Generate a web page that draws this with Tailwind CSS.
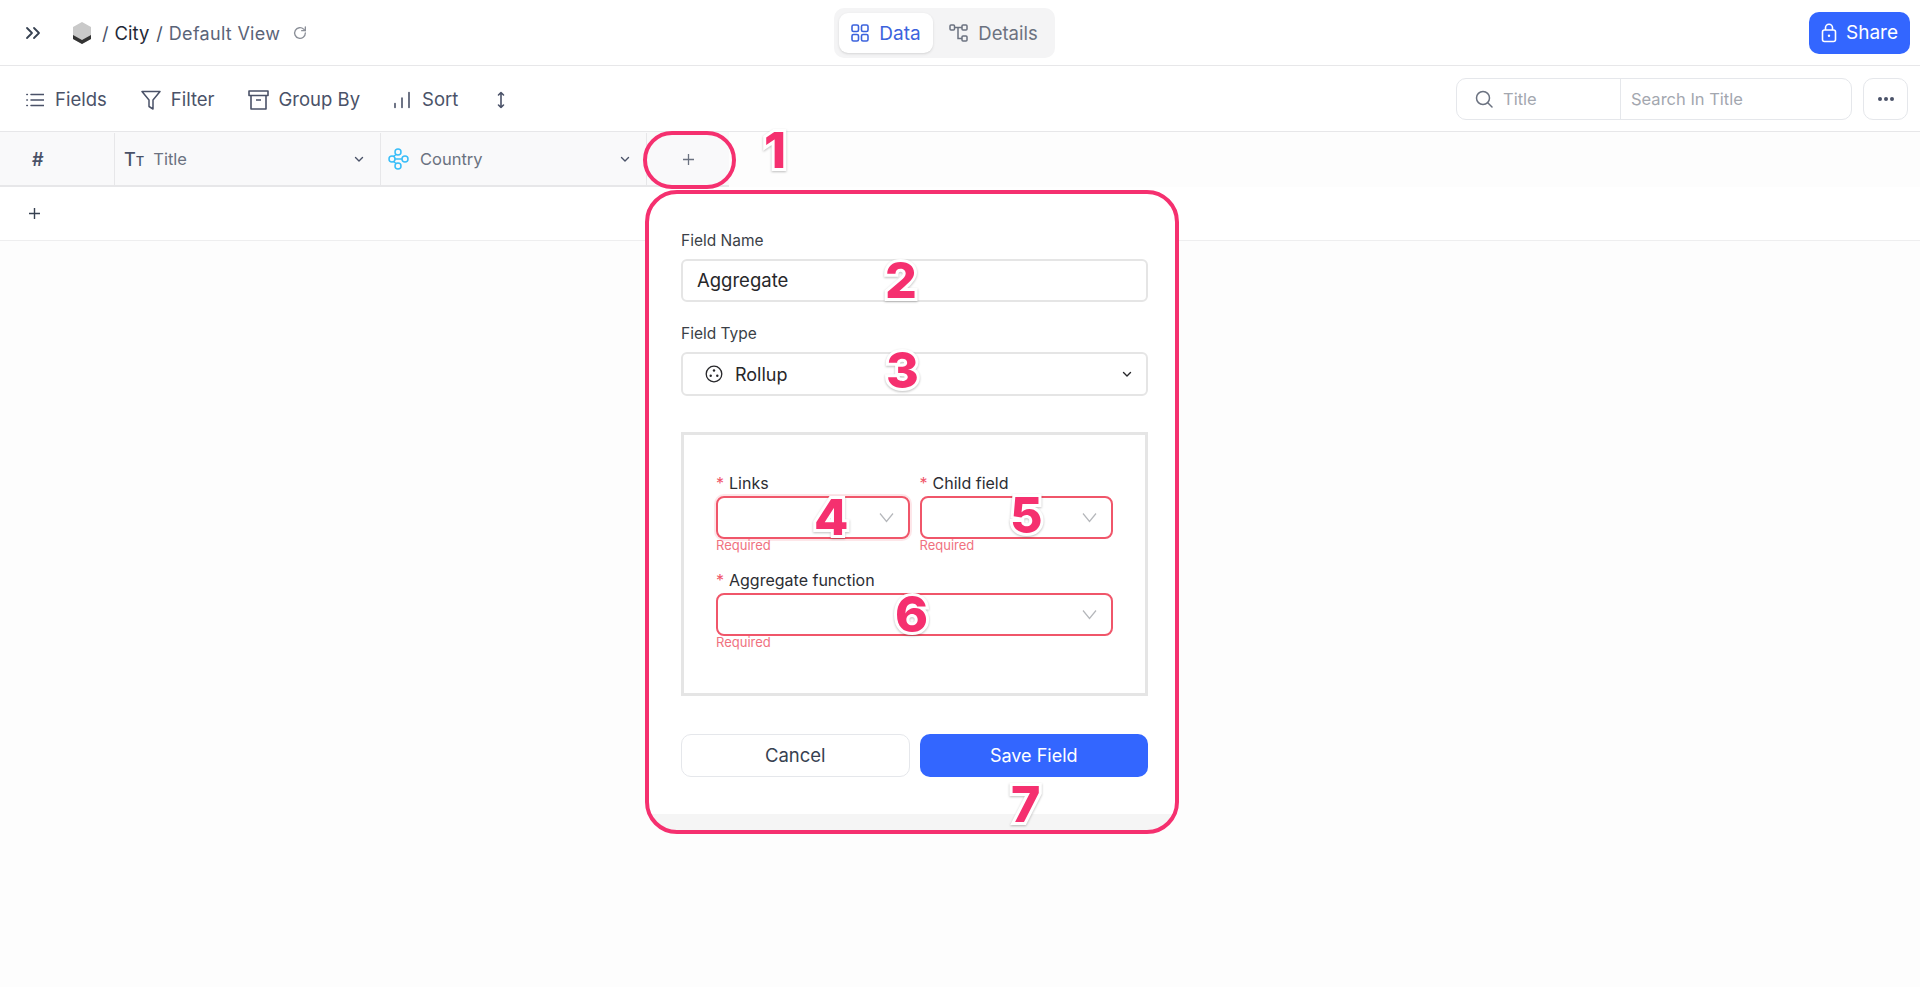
<!DOCTYPE html>
<html lang="en">
<head>
    <meta charset="UTF-8">
    <title>City - Default View</title>
    <script src="https://cdn.jsdelivr.net/npm/@tailwindcss/browser@4"></script>
</head>
<body class="relative h-[987px] overflow-hidden bg-[#fdfdfd] font-['Inter',sans-serif] text-[#4a5268]">

    <!-- Top bar -->
    <header class="relative flex h-[66px] items-center justify-between border-b border-[#e7e7e9] bg-white pr-[10px] pl-[24px]">
        <div class="flex items-center">
            <svg class="h-[18px] w-[18px] text-[#374151]" viewBox="0 0 18 18" fill="none" stroke="currentColor" stroke-width="1.8" stroke-linecap="round" stroke-linejoin="round"><path d="M3 4l5 5-5 5M10 4l5 5-5 5"/></svg>
            <svg class="ml-[29px] h-[24px] w-[22px]" viewBox="0 0 22 24"><path d="M11 1l9 5v12l-9 5-9-5V6z" fill="#c9c9c9"/><path d="M2 14l9 5 9-5v4l-9 5-9-5z" fill="#333"/></svg>
            <span class="ml-[9px] pt-[2px] text-[18px] text-[#4a5268]">/</span>
            <span class="ml-[6px] pt-[2px] text-[18.5px] text-[#1f2937]">City</span>
            <span class="ml-[7px] pt-[2px] text-[18px] text-[#4a5268]">/</span>
            <span class="ml-[6px] pt-[2px] text-[18px] tracking-[0.3px] text-[#5b6478]">Default View</span>
            <svg class="ml-[12px] h-[16px] w-[16px] text-[#8b8f98]" viewBox="0 0 24 24" fill="none" stroke="currentColor" stroke-width="2" stroke-linecap="round" stroke-linejoin="round"><path d="M20 12a8 8 0 1 1-2.5-5.8L20 8.5"/><path d="M20 3v5.5h-5.5"/></svg>
        </div>
        <div class="absolute top-[8px] left-[834px] flex h-[50px] w-[221px] items-center gap-[4px] rounded-[10px] bg-[#f4f4f5] p-[5px]">
            <div class="flex h-[40px] w-[94px] items-center justify-center gap-[10px] rounded-[9px] bg-white text-[19px] text-[#3c63dd] shadow-sm">
                <svg class="h-[18px] w-[18px]" viewBox="0 0 18 18" fill="none" stroke="currentColor" stroke-width="1.6"><rect x="1" y="1" width="6.5" height="6.5" rx="1.5"/><rect x="10.5" y="1" width="6.5" height="6.5" rx="1.5"/><rect x="1" y="10.5" width="6.5" height="6.5" rx="1.5"/><rect x="10.5" y="10.5" width="6.5" height="6.5" rx="1.5"/></svg>
                <span class="pt-[2px]">Data</span>
            </div>
            <div class="flex h-[40px] flex-1 items-center justify-center gap-[9px] text-[18.5px] text-[#6b7280]">
                <svg class="h-[18px] w-[20px]" viewBox="0 0 20 18" fill="none" stroke="currentColor" stroke-width="1.5"><rect x="1" y="1" width="4.5" height="5" rx="1"/><rect x="13" y="1" width="5" height="5" rx="1"/><rect x="13" y="12" width="5" height="5" rx="1"/><path d="M5.500 3.500H13M9 3.500V14.500H13"/></svg>
                <span class="pt-[2px]">Details</span>
            </div>
        </div>
        <button class="flex h-[42px] w-[101px] items-center justify-center gap-[9px] rounded-[10px] bg-[#3366ff] text-[19px] text-white">
            <svg class="h-[20px] w-[16px]" viewBox="0 0 16 20" fill="none" stroke="currentColor" stroke-width="1.6"><rect x="1.500" y="7" width="13" height="11.500" rx="2"/><path d="M4.500 7V4.800a3.500 3.500 0 0 1 7 0V7"/><circle cx="8" cy="12.700" r="1.200" fill="currentColor" stroke="none"/></svg>
            <span class="pt-[2px]">Share</span>
        </button>
    </header>

    <!-- Toolbar -->
    <div class="flex h-[66px] items-center justify-between border-b border-[#e7e7e9] bg-white pr-[12px] pl-[26px] text-[18.5px] text-[#4a5268]">
        <div class="mt-[2px] flex items-center">
            <svg class="h-[18px] w-[18px]" viewBox="0 0 18 18" fill="none" stroke="currentColor" stroke-width="1.500" stroke-linecap="round"><path d="M5 3.500h13M5 9h13M5 14.500h13M.8 3.500h.6M.8 9h.6M.8 14.500h.6"/></svg>
            <span class="ml-[11px]">Fields</span>
            <svg class="ml-[34px] h-[20px] w-[20px]" viewBox="0 0 20 20" fill="none" stroke="currentColor" stroke-width="1.500" stroke-linejoin="round"><path d="M1 1.500h18l-7 8.500v9l-4-2.500v-6.500z"/></svg>
            <span class="ml-[10px]">Filter</span>
            <svg class="ml-[33px] h-[20px] w-[21px]" viewBox="0 0 21 20" fill="none" stroke="currentColor" stroke-width="1.600" stroke-linejoin="round"><rect x="1" y="1" width="19" height="4.500"/><path d="M3 5.500V19h15V5.500M8 10h5"/></svg>
            <span class="ml-[10px]">Group By</span>
            <svg class="ml-[33px] h-[18px] w-[18px]" viewBox="0 0 18 18" fill="none" stroke="currentColor" stroke-width="1.600" stroke-linecap="round"><path d="M2 16.500v-4M9 16.500V7M16 16.500V1.500"/></svg>
            <span class="ml-[11px]">Sort</span>
            <svg class="ml-[38px] h-[18px] w-[10px]" viewBox="0 0 10 18" fill="none" stroke="currentColor" stroke-width="1.600" stroke-linecap="round" stroke-linejoin="round"><path d="M5 1.500v15M2.500 4L5 1.500 7.500 4M2.500 14L5 16.500 7.500 14"/></svg>
        </div>
        <div class="flex items-center gap-[11px]">
            <div class="flex h-[42px] w-[396px] items-center rounded-[10px] border border-[#e5e7eb] bg-white text-[16.5px] text-[#a3a7af]">
                <div class="flex h-full w-[164px] items-center border-r border-[#e5e7eb] pl-[18px]">
                    <svg class="h-[18px] w-[18px] text-[#6b7280]" viewBox="0 0 18 18" fill="none" stroke="currentColor" stroke-width="1.500" stroke-linecap="round"><circle cx="8" cy="8" r="6.500"/><path d="M13 13l4 4"/></svg>
                    <span class="ml-[10px] pt-[1px]">Title</span>
                </div>
                <span class="pt-[2px] pl-[10px]">Search In Title</span>
            </div>
            <button class="flex h-[42px] w-[45px] items-center justify-center gap-[2px] rounded-[10px] border border-[#e5e7eb] bg-white">
                <span class="h-[4px] w-[4px] rounded-full bg-[#4a5268]"></span>
                <span class="h-[4px] w-[4px] rounded-full bg-[#4a5268]"></span>
                <span class="h-[4px] w-[4px] rounded-full bg-[#4a5268]"></span>
            </button>
        </div>
    </div>

    <!-- Grid -->
    <div class="flex h-[55px] w-[729px] border-b-2 border-[#e7e7e9] bg-[#f9f9fa] pt-[1px] text-[16.5px] text-[#6b7280]">
        <div class="flex w-[115px] items-center border-r border-[#e7e7e9] pl-[32px] text-[18px] font-semibold text-[#4a5268]">#</div>
        <div class="flex w-[266px] items-center border-r border-[#e7e7e9] pl-[9px]">
            <span class="text-[18px] font-medium text-[#4a5268]">T<span class="text-[13px]">T</span></span>
            <span class="ml-[9px]">Title</span>
            <svg class="mr-[16px] ml-auto h-[10px] w-[10px] text-[#4a5268]" viewBox="0 0 10 10" fill="none" stroke="currentColor" stroke-width="1.400" stroke-linecap="round" stroke-linejoin="round"><path d="M1.500 3.500L5 7l3.500-3.500"/></svg>
        </div>
        <div class="flex w-[266px] items-center border-r border-[#e7e7e9] pl-[7px]">
            <svg class="h-[22px] w-[21px] text-[#38bdf8]" viewBox="0 0 21 22" fill="none" stroke="currentColor" stroke-width="1.500"><circle cx="10" cy="4" r="3"/><circle cx="4" cy="11" r="3"/><circle cx="17" cy="11" r="3"/><circle cx="10" cy="18" r="3"/><path d="M7 11h7M8 6.500L5.500 8.500M8 15.500L5.500 13.500"/></svg>
            <span class="ml-[11px]">Country</span>
            <svg class="mr-[16px] ml-auto h-[10px] w-[10px] text-[#4a5268]" viewBox="0 0 10 10" fill="none" stroke="currentColor" stroke-width="1.400" stroke-linecap="round" stroke-linejoin="round"><path d="M1.500 3.500L5 7l3.500-3.500"/></svg>
        </div>
        <div class="flex flex-1 items-center justify-center">
            <svg class="h-[13px] w-[13px] text-[#6b7280]" viewBox="0 0 13 13" stroke="currentColor" stroke-width="1.300"><path d="M6.500 1v11M1 6.500h11"/></svg>
        </div>
    </div>
    <div class="flex h-[54px] items-center border-b border-[#eeeeef] bg-white pl-[28px]">
        <svg class="h-[13px] w-[13px] text-[#374151]" viewBox="0 0 13 13" stroke="currentColor" stroke-width="1.400"><path d="M6.500 1v11M1 6.500h11"/></svg>
    </div>

    <!-- Add field popover -->
    <div class="absolute top-[190px] left-[646px] flex h-[643px] w-[532px] flex-col overflow-hidden rounded-[32px] bg-white">
        <div class="flex flex-1 flex-col pt-[40px] pr-[30px] pl-[35px] text-[15.5px] text-[#3b3f47]">
            <label class="leading-[22px]">Field Name</label>
            <div class="mt-[7px] flex h-[43px] items-center rounded-[6px] border-2 border-[#e5e5e5] pt-[1px] pl-[14px] text-[18.5px] text-[#27272a]">Aggregate</div>
            <label class="mt-[21px] leading-[22px]">Field Type</label>
            <div class="mt-[7px] flex h-[44px] items-center rounded-[6px] border-2 border-[#e5e5e5] pr-[14px] pl-[22px] text-[18px] text-[#27272a]">
                <svg class="h-[18px] w-[18px]" viewBox="0 0 18 18" fill="none" stroke="currentColor" stroke-width="1.300"><circle cx="9" cy="9" r="7.800"/><circle cx="9" cy="5.500" r="1.200" fill="currentColor" stroke="none"/><circle cx="5.700" cy="10.800" r="1.200" fill="currentColor" stroke="none"/><circle cx="12.300" cy="10.800" r="1.200" fill="currentColor" stroke="none"/></svg>
                <span class="ml-[12px]">Rollup</span>
                <svg class="ml-auto h-[10px] w-[10px]" viewBox="0 0 10 10" fill="none" stroke="currentColor" stroke-width="1.400" stroke-linecap="round" stroke-linejoin="round"><path d="M1.500 3.500L5 7l3.500-3.500"/></svg>
            </div>

            <div class="mt-[36px] h-[264px] border-[3px] border-[#e5e5e5] px-[32px] pt-[37px]">
                <div class="grid grid-cols-2 gap-x-[10px]">
                    <div>
                        <label class="flex h-[22px] items-center text-[16px] text-[#2b2d33]"><span class="mr-[5px] text-[#f0566a]">*</span>Links</label>
                        <div class="mt-[2px] flex h-[43px] items-center justify-end rounded-[8px] border-2 border-[#f0566a] pr-[14px] shadow-[0_0_0_2px_rgba(240,86,106,0.15)]">
                            <svg class="h-[11px] w-[15px] text-[#b5b7bb]" viewBox="0 0 15 11" fill="none" stroke="currentColor" stroke-width="1.200"><path d="M1 1.500l6.500 8 6.500-8"/></svg>
                        </div>
                        <p class="text-[13px] leading-[13px] text-[#f0727f]">Required</p>
                    </div>
                    <div>
                        <label class="flex h-[22px] items-center text-[16px] text-[#2b2d33]"><span class="mr-[5px] text-[#f0566a]">*</span>Child field</label>
                        <div class="mt-[2px] flex h-[43px] items-center justify-end rounded-[8px] border-2 border-[#f0566a] pr-[14px]">
                            <svg class="h-[11px] w-[15px] text-[#b5b7bb]" viewBox="0 0 15 11" fill="none" stroke="currentColor" stroke-width="1.200"><path d="M1 1.500l6.500 8 6.500-8"/></svg>
                        </div>
                        <p class="text-[13px] leading-[13px] text-[#f0727f]">Required</p>
                    </div>
                </div>
                <label class="mt-[17px] flex h-[22px] items-center text-[16px] text-[#2b2d33]"><span class="mr-[5px] text-[#f0566a]">*</span>Aggregate function</label>
                <div class="mt-[2px] flex h-[43px] items-center justify-end rounded-[8px] border-2 border-[#f0566a] pr-[14px]">
                    <svg class="h-[11px] w-[15px] text-[#b5b7bb]" viewBox="0 0 15 11" fill="none" stroke="currentColor" stroke-width="1.200"><path d="M1 1.500l6.500 8 6.500-8"/></svg>
                </div>
                <p class="text-[13px] leading-[13px] text-[#f0727f]">Required</p>
            </div>

            <div class="mt-[38px] grid grid-cols-2 gap-x-[10px]">
                <button class="h-[43px] rounded-[10px] border border-[#e5e7eb] bg-white text-[18.5px] text-[#374151]">Cancel</button>
                <button class="h-[43px] rounded-[10px] bg-[#3366ff] text-[18px] text-white">Save Field</button>
            </div>
        </div>
        <div class="h-[19px] bg-[#f5f5f5]"></div>
    </div>

    <!-- Pink annotations -->
    <div class="absolute top-[131px] left-[643px] h-[58px] w-[93px] rounded-[30px] border-[4px] border-[#f5306f]"></div>
    <div class="absolute top-[190px] left-[645px] h-[644px] w-[534px] rounded-[32px] border-[4px] border-[#f5306f]"></div>

    <span class="absolute top-[125px] left-[764px] font-['Inter',sans-serif] text-[50px] leading-[50px] font-extrabold text-[#f5306f] [paint-order:stroke_fill] [-webkit-text-stroke:6px_white] [filter:drop-shadow(0_1px_1px_rgba(0,0,0,0.25))]">1</span>
    <span class="absolute top-[255px] left-[885px] font-['Inter',sans-serif] text-[50px] leading-[50px] font-extrabold text-[#f5306f] [paint-order:stroke_fill] [-webkit-text-stroke:6px_white] [filter:drop-shadow(0_1px_1px_rgba(0,0,0,0.25))]">2</span>
    <span class="absolute top-[345px] left-[886px] font-['Inter',sans-serif] text-[50px] leading-[50px] font-extrabold text-[#f5306f] [paint-order:stroke_fill] [-webkit-text-stroke:6px_white] [filter:drop-shadow(0_1px_1px_rgba(0,0,0,0.25))]">3</span>
    <span class="absolute top-[492px] left-[814px] font-['Inter',sans-serif] text-[50px] leading-[50px] font-extrabold text-[#f5306f] [paint-order:stroke_fill] [-webkit-text-stroke:6px_white] [filter:drop-shadow(0_1px_1px_rgba(0,0,0,0.25))]">4</span>
    <span class="absolute top-[490px] left-[1010px] font-['Inter',sans-serif] text-[50px] leading-[50px] font-extrabold text-[#f5306f] [paint-order:stroke_fill] [-webkit-text-stroke:6px_white] [filter:drop-shadow(0_1px_1px_rgba(0,0,0,0.25))]">5</span>
    <span class="absolute top-[589px] left-[895px] font-['Inter',sans-serif] text-[50px] leading-[50px] font-extrabold text-[#f5306f] [paint-order:stroke_fill] [-webkit-text-stroke:6px_white] [filter:drop-shadow(0_1px_1px_rgba(0,0,0,0.25))]">6</span>
    <span class="absolute top-[779px] left-[1011px] font-['Inter',sans-serif] text-[50px] leading-[50px] font-extrabold text-[#f5306f] [paint-order:stroke_fill] [-webkit-text-stroke:6px_white] [filter:drop-shadow(0_1px_1px_rgba(0,0,0,0.25))]">7</span>

</body>
</html>
